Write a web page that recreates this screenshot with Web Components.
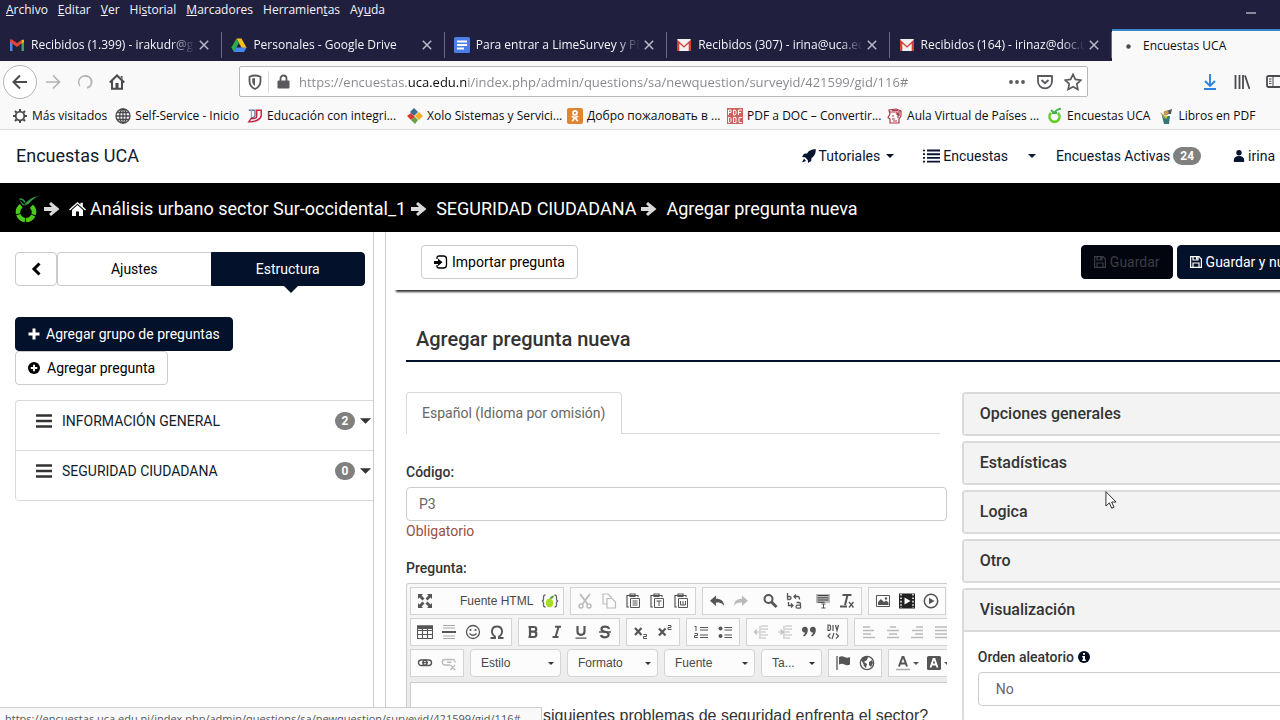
<!DOCTYPE html>
<html lang="es">
<head>
<meta charset="utf-8">
<title>Encuestas UCA</title>
<style>
html,body{margin:0;height:100%}
body{font-family:Roboto,sans-serif;font-size:14px;line-height:20px;color:#111c2b;background:#fff;overflow:hidden}
</style>
</head>
<body>
<survey-window></survey-window>
<script>
const ICONS={
gmail:['0 0 16 14','<path d="M1 13V2.5L3.5 4v9z" fill="#4a86ee"/><path d="M12.500 13V4L15 2.500V13z" fill="#38a656"/><path d="M1 2.500Q1 .5 3 1.500L8 5.300 12.500 2v3.500L8 9 1 4z" fill="#e24436"/><path d="M12.500 2.200Q15 .3 15 3v1l-2.500 2z" fill="#f7b90c"/>'],
drive:['0 0 16 16','<path d="M5.500 1.500h5L15.700 11h-5z" fill="#fbbc1f"/><path d="M5.500 1.500L8 6 3 15 .3 10.500z" fill="#2da94f"/><path d="M5.300 10.500h10.400L13 15H2.800z" fill="#4587f3"/>'],
docs:['0 0 16 16','<rect width="16" height="16" rx="1.500" fill="#4a7fe8"/><path d="M3 4.500h10M3 8h10M3 11.500h7" stroke="#fff" stroke-width="1.800"/>'],
gmailold:['0 0 16 14','<rect x="1" y="1" width="14" height="12" rx="1" fill="#f2f0f0"/><path d="M1 13V1.500L8 8l7-6.500V13h-2.300V5.500L8 9.800 3.300 5.500V13z" fill="#d14138"/>'],
close:['0 0 10 10','<path d="M.8.8l8.400 8.400M9.200.8L.8 9.200" stroke="currentColor" stroke-width="1.500"/>'],
back:['0 0 16 16','<path d="M15 8H1.500M8 1.500L1.500 8 8 14.500" fill="none" stroke="currentColor" stroke-width="2"/>'],
fwd:['0 0 16 16','<path d="M1 8h13.500M8 1.500L14.500 8 8 14.500" fill="none" stroke="currentColor" stroke-width="1.700"/>'],
load:['0 0 16 16','<path d="M3 12A6.200 6.200 0 0 1 8 2" fill="none" stroke="currentColor" stroke-width="1.400"/><path d="M8 2a6 6 0 0 1 2 11.800" fill="none" stroke="currentColor" stroke-width="2"/>'],
home:['0 0 16 16','<path d="M.8 8.500L8 1.500l7.200 7M3 7v7.800h10V7" fill="none" stroke="currentColor" stroke-width="2"/><path d="M6.500 9h3v6h-3zM11.500 2h2v4" fill="currentColor"/>'],
shield:['0 0 14 16','<path d="M7 1.500c2 0 4 .5 5.500 1.200V7c0 4-2 6.500-5.500 8C3.500 13.500 1.500 11 1.500 7V2.700C3 2 5 1.500 7 1.500z" fill="none" stroke="currentColor" stroke-width="1.800"/><path d="M7 4v8c-1.800-1-2.800-2.800-2.800-5V4.600z" fill="currentColor"/>'],
lock:['0 0 12 15','<path d="M3 7V4.500a3 3 0 0 1 6 0V7" fill="none" stroke="currentColor" stroke-width="1.800"/><rect x="0" y="6.500" width="12" height="8" rx="1" fill="currentColor"/>'],
dots:['0 0 16 4','<circle cx="2" cy="2" r="1.900" fill="currentColor"/><circle cx="8" cy="2" r="1.900" fill="currentColor"/><circle cx="14" cy="2" r="1.900" fill="currentColor"/>'],
pocket:['0 0 16 16','<path d="M1 2h14v5.500a7 6.800 0 0 1-14 0z" fill="none" stroke="currentColor" stroke-width="1.800" stroke-linejoin="round"/><path d="M4.500 6L8 9.300 11.500 6" fill="none" stroke="currentColor" stroke-width="1.900"/>'],
star:['0 0 16 16','<path d="M8 1.200l2.100 4.500 4.900.6-3.600 3.400.9 4.900L8 12.200l-4.300 2.400.9-4.900L1 6.300l4.900-.6z" fill="none" stroke="currentColor" stroke-width="1.500"/>'],
down:['0 0 14 16','<path d="M7 0v11.500M2 7l5 5 5-5M1 15h12" fill="none" stroke="currentColor" stroke-width="1.900"/>'],
library:['0 0 16 14','<path d="M1.500 0v14M5.500 0v14M9 0v14M11 .5L15.500 14" fill="none" stroke="currentColor" stroke-width="1.800"/>'],
sidebar:['0 0 16 13','<rect x="1" y="1" width="14" height="11" rx="1.500" fill="none" stroke="currentColor" stroke-width="1.800"/><path d="M7 1v11M3 4h2.500M3 6.300h2.500M3 8.600h2.500" stroke="currentColor"/>'],
gear:['0 0 16 16','<circle cx="8" cy="8" r="4.300" fill="none" stroke="currentColor" stroke-width="1.800"/><path d="M8 1v2M8 13v2M1 8h2M13 8h2M3 3l1.500 1.500M11.500 11.500L13 13M3 13l1.500-1.500M11.500 4.500L13 3" stroke="currentColor" stroke-width="2"/>'],
globe:['0 0 16 16','<g fill="none" stroke="currentColor" stroke-width="1.300"><circle cx="8" cy="8" r="7"/><ellipse cx="8" cy="8" rx="3.300" ry="7"/><path d="M8 1v14M1 8h14M2 4.500h12M2 11.500h12"/></g>'],
edu:['0 0 18 16','<path d="M2 1.500h7v6q-1 3-5 3" fill="none" stroke="#5f7a9c" stroke-width="1.500"/><path d="M5 1v8" stroke="#9aa9ba" stroke-width="1.500"/><path d="M11 1.500h5v6c-1 5-8 7.500-14 7l3-4c4 1 6 0 6-3z" fill="none" stroke="#c4203f" stroke-width="1.600"/>'],
xolo:['0 0 16 16','<path d="M7 0l4 4-4 4-4-4z" fill="#3b6d8c"/><path d="M12 4l4 4-4 4-4-4z" fill="#f0b02c"/><path d="M4 5l4 4-4 3-4-4z" fill="#d8382f"/><path d="M8 9l3 3-3 4-4-4z" fill="#6ba13c"/>'],
ok:['0 0 16 16','<rect width="16" height="16" rx="2" fill="#e08430"/><g fill="none" stroke="#fff" stroke-width="1.700"><circle cx="8" cy="4.800" r="2"/><path d="M4.800 8.300q3.200 2 6.400 0M8 9.500l-2.800 3.800M8 9.500l2.800 3.800"/></g>'],
pdfdoc:['0 0 16 16','<rect width="16" height="16" fill="#cf5f5c"/><g fill="none" stroke="#fff"><path d="M1.500 7V2h2.500v2.500H1.500M6.500 2v5h1.500l1-1V3L8 2zM11.500 7V2H15M11.500 4.500h2.500M1.500 9.500v5H3l1-1v-3l-1-1zM6.500 9.500H9v5H6.500zM15 9.500h-3v5h3"/></g>'],
aula:['0 0 16 16','<g fill="none" stroke="#ad3a4a" stroke-width="1.200"><path d="M3 15v-4L1 9.500 3 6 2 2l7-1 5 2v5l-2 3v4zM3 4h7v3M5 8h2M11 5v5M5 11h3M12 2v6M6 13h4M5 2.500h6"/></g>'],
lime:['0 0 24 26','<path d="M6.300 9.700A8 8 0 1 0 15.700 9.700" fill="none" stroke="#4fc81c" stroke-width="4.500" stroke-dasharray="9 1"/><path d="M4 3.500L9.500 9C12 4.500 17 1 24 0 19.500 2 16 4.500 13.500 8L9.500 9.500 7.500 9z" fill="#2f9e45"/><path d="M4.500 3q4 0 5.500 3.500" fill="none" stroke="#2f9e45" stroke-width="1.500"/>'],
limes:['0 0 16 16','<path d="M4 5a5 5.200 0 1 0 7 0" fill="none" stroke="#62cf28" stroke-width="2.600"/><path d="M4 2l3 3C9 2 11 1 14 .5M5 5h5" stroke="#3fb449" stroke-width="1.800" fill="none"/>'],
libros:['0 0 16 16','<path d="M8 3l6-2-1 5-3 0z" fill="#555"/><circle cx="8" cy="5" r="2.500" fill="#c79a52"/><path d="M4 8h8l-1 8H6z" fill="#35777a"/><path d="M2 4l5 4-1 3z" fill="#8aa34c"/><path d="M6 8h4l-2 3z" fill="#e3c33c"/>'],
rocket:['0 0 14 14','<path d="M13.800.2C9 .2 6.500 2 5 4.500L2 4.800 0 8l3 .2L5.800 11 6 14l3.200-2 .3-3C12 7.500 13.800 5 13.800.2zM2 9.500L0 13.500l4-1.500z" fill="currentColor"/>'],
caret:['0 0 8 4','<path d="M0 0h8L4 4z" fill="currentColor"/>'],
list:['0 0 17 14','<path d="M4 1.500h13M4 5.200h13M4 8.900h13M4 12.600h13" stroke="currentColor" stroke-width="1.900"/><path d="M0 1.500h2M0 5.200h2M0 8.900h2M0 12.600h2" stroke="currentColor" stroke-width="1.700"/>'],
user:['0 0 12 12','<circle cx="6" cy="2.800" r="2.700" fill="currentColor"/><path d="M1.500 12Q.8 12 .8 10.500.8 6 6 6t5.200 4.500Q11.200 12 10.500 12z" fill="currentColor"/>'],
arrow:['0 0 16 14','<path d="M0 5h8L5 2l2-2 8.500 7L7 14l-2-2 3-3H0z" fill="currentColor"/>'],
house:['0 0 17 14','<path d="M8.500 0l3 2.600V.8h2.300v3.800L17 7.500l-1 1-7.500-6.700L1 8.500l-1-1z" fill="currentColor"/><path d="M8.500 3L14 8v6h-4V9.500H7V14H3V8z" fill="currentColor"/>'],
chev:['0 0 10 14','<path d="M8.500 1.500L3 7l5.500 5.500" fill="none" stroke="currentColor" stroke-width="3"/>'],
plus:['0 0 12 12','<path d="M6 .5v11M.5 6h11" stroke="currentColor" stroke-width="3"/>'],
pluscircle:['0 0 12 12','<circle cx="6" cy="6" r="6" fill="currentColor"/><path d="M6 2.700v6.600M2.700 6h6.600" stroke="#fff" stroke-width="1.900"/>'],
bars:['0 0 16 14','<path d="M0 1.500h16M0 7h16M0 12.500h16" stroke="currentColor" stroke-width="2.600"/>'],
import:['0 0 14 14','<path d="M3 4V3Q3 1 5 1h4.500q3 0 3 3v6q0 3-3 3H5q-2 0-2-2v-1" fill="none" stroke="currentColor" stroke-width="1.300"/><path d="M0 6h4V3.500L8.500 7.300 4 11V9H0z" fill="currentColor"/>'],
save:['0 0 12 12','<path d="M.6.600h8.400l2.400 2.400v8.400H.6z" fill="none" stroke="currentColor" stroke-width="1.200"/><path d="M3 11V7h6v4M3 .6V4h5V.6" fill="none" stroke="currentColor" stroke-width="1.200"/><path d="M6 1h1.500v2.500H6z" fill="currentColor"/>'],
info:['0 0 12 12','<circle cx="6" cy="6" r="6" fill="#020d20"/><path d="M5 2h2v1.800H5zM4.200 5H7v3.500h.8V10H4.200V8.500H5v-2h-.8z" fill="#fff"/>'],
max:['0 0 16 16','<path d="M1 1h5L4.500 2.500l3 3-2 2-3-3L1 6zM15 1v5l-1.500-1.500-3 3-2-2 3-3L10 1zM1 15v-5l1.500 1.500 3-3 2 2-3 3L6 15zM15 15h-5l1.500-1.500-3-3 2-2 3 3L15 10z" fill="currentColor"/>'],
braces:['0 0 18 14','<path d="M4.500 1Q2.500 1 2.500 3v2Q2.500 7 .8 7q1.700 0 1.700 2v2q0 2 2 2M13.500 1q2 0 2 2v2q0 2 1.700 2-1.700 0-1.700 2v2q0 2-2 2" fill="none" stroke="#666" stroke-width="1.300"/><ellipse cx="8.500" cy="9" rx="3.600" ry="4.200" fill="#a6e01c"/><path d="M8.500 5Q9.500 1.500 13 1.500 12.500 5 8.500 5z" fill="#4d9d2f"/>'],
cut:['0 0 16 16','<path d="M3 1l7.500 10M13 1L5.500 11" stroke="currentColor" stroke-width="1.800"/><circle cx="4" cy="13" r="2" fill="none" stroke="currentColor" stroke-width="1.500"/><circle cx="12" cy="13" r="2" fill="none" stroke="currentColor" stroke-width="1.500"/>'],
copy:['0 0 16 16','<path d="M5.500 11H2V1h5l3 3v1M6 5.500h5L14.500 9v6H6z" fill="none" stroke="currentColor" stroke-width="1.200"/>'],
paste:['0 0 16 16','<path d="M4 14H2V2.500h11V4M5 1h5v2.500H5z" fill="none" stroke="currentColor" stroke-width="1.200"/><path d="M5.500 5.500h9v9h-9zM7.500 8h5M7.500 10h5M7.500 12h5" fill="none" stroke="currentColor"/>'],
pastet:['0 0 16 16','<path d="M4 14H2V2.500h11V4M5 1h5v2.500H5z" fill="none" stroke="currentColor" stroke-width="1.200"/><path d="M5.500 5.500h9v9h-9zM7.500 8h5M10 8v5" fill="none" stroke="currentColor"/>'],
pastew:['0 0 16 16','<path d="M4 14H2V2.500h11V4M5 1h5v2.500H5z" fill="none" stroke="currentColor" stroke-width="1.200"/><path d="M5.500 5.500h9v9h-9zM7.500 8v4h5V8M10 8v4" fill="none" stroke="currentColor"/>'],
undo:['0 0 16 16','<path d="M7 2.500v3.300c5 0 8 2 8 7.200-1.500-3-4-3.500-8-3.500V13L1 7.800z" fill="currentColor"/>'],
redo:['0 0 16 16','<path d="M9 2.500v3.300c-5 0-8 2-8 7.200 1.500-3 4-3.500 8-3.500V13l6-5.200z" fill="currentColor"/>'],
find:['0 0 16 16','<circle cx="6.500" cy="6" r="4" fill="none" stroke="currentColor" stroke-width="2"/><path d="M9.500 9l5 5" stroke="currentColor" stroke-width="2.800"/>'],
replace:['0 0 16 16','<g fill="none" stroke="currentColor" stroke-width="1.300"><path d="M1.500 0v6.500M1.500 3.500h2a1.500 1.500 0 0 1 0 3h-2M10.500 9.500h2.500q1.500 0 1.500 1.500v4.300M14.500 12.200h-3a1.500 1.500 0 0 0 0 3h3M8 3.500h4q1.500 0 1.500 3M10 1.500L8 3.500l2 2M2.500 9v3.500H7M5 10.500l2 2-2 2"/></g>'],
selall:['0 0 16 16','<path d="M1 1h14v9H1z" fill="#bbb"/><path d="M2.500 2.500h11M2.500 4.800h11M2.500 7h11M2.500 9.300h7" stroke="#444"/><path d="M6.500 11h4M8.500 11v4M6.500 15h4" stroke="currentColor"/>'],
rmfmt:['0 0 16 16','<path d="M3.500 2h9M8.500 2L6 12M1 13.500h7" stroke="currentColor" stroke-width="2" fill="none"/><path d="M10 9l4.500 5.500M14.500 9L10 14.500" stroke="currentColor" stroke-width="1.300"/>'],
image:['0 0 16 16','<path d="M1.500 2.500h13v11h-13z" fill="none" stroke="currentColor"/><path d="M3 12V9l3-3 3 3 2-1.500 2.500 2V12z" fill="currentColor"/><circle cx="11" cy="5.500" r="1.200" fill="currentColor"/>'],
film:['0 0 16 16','<path d="M0 .5h16v15H0z" fill="#222"/><path d="M2 1v14M14 1v14" stroke="#fff" stroke-width="1.500" stroke-dasharray="1.600 1.800"/><path d="M5.500 4.500l6 3.500-6 3.500z" fill="#fff"/>'],
play:['0 0 16 16','<circle cx="8" cy="8" r="6.700" fill="none" stroke="currentColor" stroke-width="1.500"/><path d="M6 4.700L11.500 8 6 11.300z" fill="currentColor"/>'],
table:['0 0 16 16','<path d="M.5 2h15v12.500H.5zM.5 6.500h15M.5 10.500h15M5.500 5v9.500M10.500 5v9.500" fill="none" stroke="currentColor" stroke-width="1.100"/><path d="M0 1.500h16v3.500H0z" fill="currentColor"/>'],
hr:['0 0 16 16','<path d="M2 1.500h12M2 4h12M2 12h12M2 14.500h12" stroke="#aaa" stroke-width="1.200"/><path d="M1 8h14" stroke="currentColor" stroke-width="2"/>'],
smile:['0 0 16 16','<circle cx="8" cy="8" r="6.500" fill="none" stroke="currentColor" stroke-width="1.300"/><circle cx="5.500" cy="6" r="1.100" fill="currentColor"/><circle cx="10.500" cy="6" r="1.100" fill="currentColor"/><path d="M4.500 9.500q3.500 3.500 7 0" fill="none" stroke="currentColor" stroke-width="1.300"/>'],
omega:['0 0 16 16','<path d="M1.500 14H6v-1.500C1 9 2.500 2.500 8 2.500s7 6.500 2 10V14h4.500" fill="none" stroke="currentColor" stroke-width="1.900"/>'],
bold:['0 0 16 16','<path d="M5 3v10M3.500 3H9a2.200 2.300 0 0 1 0 4.700H5M9 7.700a2.300 2.600 0 0 1 0 5.300H3.500" fill="none" stroke="currentColor" stroke-width="2.200"/>'],
italic:['0 0 16 16','<path d="M6 2.800h6M3.500 13h6M9.500 3L6.500 13" fill="none" stroke="currentColor" stroke-width="2"/>'],
under:['0 0 16 16','<path d="M4.500 2v5.500q0 3.300 3.500 3.300t3.500-3.300V2" fill="none" stroke="currentColor" stroke-width="2.200"/><path d="M2.500 14.200h11" stroke="currentColor" stroke-width="1.300"/>'],
strike:['0 0 16 16','<path d="M12 5q-.5-2.300-4-2.300T4.500 5.200Q4.500 7 8 7.800t3.700 2.700Q11.500 13.300 8 13.300T4 11" fill="none" stroke="currentColor" stroke-width="2.200"/><path d="M2 8h12" stroke="currentColor" stroke-width="1.300"/>'],
sub:['0 0 16 16','<path d="M2 4l6.500 7M8.500 4L2 11" stroke="currentColor" stroke-width="2.200"/><path d="M10.500 10.500h3v2h-3v2h3.500" fill="none" stroke="currentColor"/>'],
sup:['0 0 16 16','<path d="M2 4.500l6.500 7M8.500 4.500L2 11.500" stroke="currentColor" stroke-width="2.200"/><path d="M11 1.500h3v2h-3v2h3.500" fill="none" stroke="currentColor"/>'],
ol:['0 0 16 16','<path d="M3 2v5M1.500 2.500H3M1.500 9.500h3v2h-3v2h3.500" fill="none" stroke="currentColor"/><path d="M7 3.500h8M7 6h8M7 11h8M7 13.500h8" stroke="currentColor" stroke-width="1.200"/>'],
ul:['0 0 16 16','<circle cx="3.500" cy="4.500" r="2" fill="currentColor"/><circle cx="3.500" cy="12" r="2" fill="currentColor"/><path d="M7.500 3.500h7.500M7.500 6h7.500M7.500 11h7.500M7.500 13.500h7.500" stroke="currentColor" stroke-width="1.200"/>'],
outd:['0 0 16 16','<path d="M8 2h7M8 5h7M8 8h5M8 11h7M8 14h5M6 8H2M4 5.500L1.500 8 4 10.500M7 2v13" fill="none" stroke="currentColor" stroke-width="1.100"/>'],
ind:['0 0 16 16','<path d="M8 2h7M8 5h7M8 8h5M8 11h7M8 14h5M1 8h5M3.500 5.500L6 8l-2.500 2.500M7 2v13" fill="none" stroke="currentColor" stroke-width="1.100"/>'],
quote:['0 0 16 16','<path d="M1 5.700a2.800 2.800 0 0 1 5.800 0Q7 10 3 12.500L2 11.700Q4 10 4 8.500 1 8.500 1 5.700zM9 5.700a2.800 2.800 0 0 1 5.800 0Q15 10 11 12.500l-1-.8Q12 10 12 8.500 9 8.500 9 5.700z" fill="currentColor"/>'],
div:['0 0 16 16','<path d="M3 1v5.500h1.500l1-1V2l-1-1zM8 1v6M10.500 1l1.500 5.500L13.500 1M5.500 9.500L3 12l2.500 2.500M9 9l-2 6M11 9.500l2.500 2.500-2.500 2.500" fill="none" stroke="currentColor" stroke-width="1.200"/>'],
al:['0 0 16 16','<path d="M2 3h7M2 6.500h11M2 10h8M2 13.500h12" stroke="currentColor" stroke-width="1.600"/>'],
ac:['0 0 16 16','<path d="M5 3h6M2 6.500h12M4 10h8M2 13.500h12" stroke="currentColor" stroke-width="1.600"/>'],
ar:['0 0 16 16','<path d="M7 3h7M3 6.500h11M6 10h8M2 13.500h12" stroke="currentColor" stroke-width="1.600"/>'],
aj:['0 0 16 16','<path d="M2 3h12M2 6.500h12M2 10h12M2 13.500h12" stroke="currentColor" stroke-width="1.600"/>'],
link:['0 0 16 16','<rect x="1.500" y="5" width="8.500" height="5.500" rx="2.700" fill="none" stroke="currentColor" stroke-width="1.400"/><rect x="6" y="5" width="8.500" height="5.500" rx="2.700" fill="none" stroke="currentColor" stroke-width="1.400"/><path d="M5 7.700h6" stroke="currentColor" stroke-width="1.200"/>'],
unlink:['0 0 16 16','<path d="M9 10H4a2.700 2.700 0 0 1 0-5.500h8a2.500 2.500 0 0 1 2 3M6 7.200h4.500" fill="none" stroke="currentColor" stroke-width="1.400"/><path d="M9.500 10l4.500 5M14 10l-4.500 5" stroke="currentColor" stroke-width="1.300"/>'],
flag:['0 0 16 16','<path d="M2 1v14" stroke="currentColor" stroke-width="1.300"/><path d="M4 2q3-1.500 5.500 0T15 2v7.500q-3 1.500-5.500 0T4 9.500z" fill="currentColor"/>'],
world:['0 0 16 16','<circle cx="8" cy="8" r="6.700" fill="none" stroke="currentColor" stroke-width="1.300"/><path d="M2 5l3-3 4 0-1 3-3 2 3 2-1 4-2-2-1-3zM10 7l3-2 1 3-2 4-2-2z" fill="currentColor"/>'],
fore:['0 0 16 16','<path d="M4 11.500L7.500 2h1L12 11.500M5.500 8.500h5" fill="none" stroke="currentColor" stroke-width="2"/><path d="M1 14.500h14" stroke="#aaa" stroke-width="1.500"/>'],
backc:['0 0 16 16','<rect x="1" y="1" width="14" height="14" rx="1.500" fill="currentColor"/><path d="M4.500 12.500L7.500 4h1l3 8.500M5.500 9.500h5" fill="none" stroke="#fff" stroke-width="1.800"/>'],
cursor:['0 0 13 20','<path d="M1 1v15.500l3.700-3.400 2.600 5.800 2.500-1.100-2.600-5.600H12z" fill="#fff" stroke="#222"/>'],
spin:['0 0 6 6','<circle cx="3" cy="3" r="2.700" fill="#4a4a4f"/>'],
min:['0 0 10 2','<path d="M0 1h10" stroke="currentColor"/>']
};
class Base extends HTMLElement{
  connectedCallback(){
    if(this.shadowRoot)return;
    this.attachShadow({mode:'open'}).innerHTML='<style>*{box-sizing:border-box}a{color:inherit;text-decoration:none}button,input,select{font:inherit;color:inherit;margin:0}'+this.css()+'</style>'+this.html();
  }
  a(n,d=''){return this.getAttribute(n)??d}
}
const def=(name,css,html)=>customElements.define(name,class extends Base{css(){return typeof css==='function'?css(this):css}html(){return typeof html==='function'?html(this):html}});
const ic=(n,w=16,h=w)=>`<ui-icon name="${n}" w="${w}" h="${h}"></ui-icon>`;

def('ui-icon',e=>`:host{display:inline-flex;flex:none;width:${e.a('w',16)}px;height:${e.a('h',e.a('w',16))}px}svg{width:100%;height:100%;display:block}`,
 e=>{const i=ICONS[e.a('name')];return `<svg viewBox="${i[0]}" aria-hidden="true">${i[1]}</svg>`});

/* ---------- browser chrome ---------- */
def('browser-menu',`:host{display:flex;height:29px;background:#201f3d;color:#f4f4fa;align-items:flex-start;padding:0 24px 0 1px}
 nav{display:flex;flex:1}button{border:0;background:none;padding:0 5px;height:20px;line-height:20px}
 .min{height:26px;padding:0;display:flex;align-items:center}u{text-underline-offset:1px}`,
 `<nav aria-label="Menú">${['<u>A</u>rchivo','<u>E</u>ditar','<u>V</u>er','Hi<u>s</u>torial','<u>M</u>arcadores','Herramien<u>t</u>as','Ay<u>u</u>da'].map(t=>`<button>${t}</button>`).join('')}</nav><button class="min" aria-label="Minimizar">${ic('min',10,2)}</button>`);

def('browser-tab',`:host{display:flex;align-items:center;min-width:0;height:32px;color:#f4f4fa;padding:0 12px 0 9px;position:relative;border-right:1px solid transparent;border-image:linear-gradient(transparent 12%,#6b6a82 12%,#6b6a82 88%,transparent 88%) 1}
 :host([active]){background:#f9f9fa;color:#0c0c0d;border:0;border-top:2px solid #3b86c6;padding-left:13px}
 .t{flex:1;min-width:0;overflow:hidden;white-space:nowrap;margin-left:6px;-webkit-mask-image:linear-gradient(90deg,#000 calc(100% - 24px),transparent)}
 :host([active]) .t{margin-left:10px;-webkit-mask-image:none}
 button{border:0;background:none;padding:0;height:16px;display:flex;align-items:center;color:#b9b9c8;margin-left:4px}
 i{display:flex;width:16px;justify-content:center;flex:none}:host([active]) i{width:8px}`,
 e=>e.hasAttribute('active')?`<i>${ic('spin',5)}</i><span class="t"><slot></slot></span>`:
 `<i>${ic(e.a('icon'),16,e.a('icon').startsWith('gmail')?14:16)}</i><span class="t"><slot></slot></span><button aria-label="Cerrar">${ic('close',10)}</button>`);

def('browser-tabs',`:host{display:grid;grid-template-columns:repeat(5,minmax(0,1fr)) 168px;background:#201f3d}`,
 `<browser-tab icon="gmail">Recibidos (1.399) - irakudr@gm</browser-tab><browser-tab icon="drive">Personales - Google Drive</browser-tab><browser-tab icon="docs">Para entrar a LimeSurvey y PDF</browser-tab><browser-tab icon="gmailold">Recibidos (307) - irina@uca.edu</browser-tab><browser-tab icon="gmailold">Recibidos (164) - irinaz@doc.uc</browser-tab><browser-tab active>Encuestas UCA</browser-tab>`);

def('browser-toolbar',`:host{display:flex;align-items:center;height:41px;background:#f9f9fa;color:#4a4a4f;padding-left:3px}
 button{border:0;background:none;padding:0;width:32px;height:32px;display:flex;align-items:center;justify-content:center;flex:none}
 .back{width:34px;height:34px;border:1px solid #b5b5b8;border-radius:50%;background:#fff}.dim{color:#b4b4b8}
 .url{display:flex;align-items:center;flex:1;height:31px;border:1px solid #b8b8bc;border-radius:2px;background:#fff;margin:0 106px;padding:0 0 0 7px;color:#5a5a5e}
 .url button{width:28px}.url .sh{width:16px}.sep{width:1px;height:22px;background:#dcdcde;margin:0 8px 0 5px}
 input{flex:1;min-width:0;border:0;outline:0;padding:0;margin-left:9px;font-size:13px;height:28px;color:transparent;background:linear-gradient(90deg,#85858a 108px,#0c0c0d 108px,#0c0c0d 169px,#85858a 169px);-webkit-background-clip:text;background-clip:text}
 .dl{color:#2a84dd}.end{display:flex;margin-right:-10px}`,
 `<button class="back" aria-label="Atrás">${ic('back',16)}</button><button class="dim" aria-label="Adelante">${ic('fwd',16)}</button><button class="dim" aria-label="Cargando">${ic('load',16)}</button><button aria-label="Inicio">${ic('home',16)}</button>
 <div class="url"><button class="sh" aria-label="Protección">${ic('shield',14,16)}</button><span class="sep"></span>${ic('lock',13,15)}<input aria-label="Dirección" value="https://encuestas.uca.edu.ni/index.php/admin/questions/sa/newquestion/surveyid/421599/gid/116#"><button aria-label="Acciones">${ic('dots',16,4)}</button><button aria-label="Pocket">${ic('pocket',16)}</button><button aria-label="Marcar">${ic('star',18)}</button></div>
 <div class="end"><button class="dl" aria-label="Descargas">${ic('down',14,16)}</button><button aria-label="Biblioteca">${ic('library',16,14)}</button><button aria-label="Barra lateral">${ic('sidebar',16,13)}</button></div>`);

def('book-mark',`:host{display:block;flex:none}:host([wide]){width:152px}a{display:flex;align-items:center;gap:4px;white-space:nowrap;color:#0c0c0d}ui-icon{color:#4a4a4f}`,
 e=>`<a href="#">${ic(e.a('icon'),16)}<span><slot></slot></span></a>`);
def('bookmark-bar',`:host{display:flex;gap:8px;align-items:center;height:28px;background:#f9f9fa;border-bottom:1px solid #dcdcde;padding-left:12px;overflow:hidden}`,
 `<book-mark icon="gear">Más visitados</book-mark><book-mark icon="globe">Self-Service - Inicio</book-mark><book-mark wide icon="edu">Educación con integri...</book-mark><book-mark wide icon="xolo">Xolo Sistemas y Servici...</book-mark><book-mark wide icon="ok">Добро пожаловать в ...</book-mark><book-mark wide icon="pdfdoc">PDF a DOC – Convertir...</book-mark><book-mark wide icon="aula">Aula Virtual de Países ...</book-mark><book-mark icon="limes">Encuestas UCA</book-mark><book-mark icon="libros">Libros en PDF</book-mark>`);
def('browser-chrome',`:host{display:block;flex:none;font-family:"Open Sans","Noto Sans",sans-serif;font-size:12px;line-height:16px}`,
 `<browser-menu></browser-menu><browser-tabs></browser-tabs><browser-toolbar></browser-toolbar><bookmark-bar></bookmark-bar>`);

/* ---------- site header ---------- */
def('count-badge',`:host{display:inline-block;min-width:20px;height:18px;padding:0 7px;border-radius:9px;background:#808080;color:#fff;font-size:12px;line-height:18px;font-weight:700;text-align:center;flex:none}:host([small]){padding:0 6px}`,`<slot></slot>`);
def('site-nav',`:host{display:flex;align-items:center;box-sizing:border-box;height:53px;flex:none;padding:0 5px 2px 16px;justify-content:space-between;color:#111c2b}
 .brand{font-size:18px}nav,nav a{display:flex;align-items:center}nav{gap:20px}nav a{gap:3px;color:#081530}.first{gap:6px;margin-right:9px}.first span{margin-left:-3px}.user{margin-left:12px}`,
 `<a class="brand" href="#">Encuestas UCA</a><nav><a class="first" href="#">${ic('rocket',14)}<span>Tutoriales</span>${ic('caret',8,4)}</a><a href="#">${ic('list',17,14)}<span>Encuestas</span></a><a href="#" aria-label="Más encuestas">${ic('caret',8,4)}</a><a href="#"><span>Encuestas Activas</span><count-badge>24</count-badge></a><a class="user" href="#">${ic('user',12)}<span>irina</span></a></nav>`);
def('crumb-bar',`:host{display:flex;align-items:center;height:49px;flex:none;background:#000;color:#fff;font-size:18px;padding:0 15px;white-space:nowrap;padding-top:2px}
 a{display:flex;align-items:center;gap:4px}.ar{color:#d9d9d9;margin:0 9px 0 5px}`,
 `<a href="#" aria-label="LimeSurvey">${ic('lime',24,26)}</a><ui-icon class="ar" name="arrow" w="16" h="14"></ui-icon><a href="#">${ic('house',17,14)}<span>Análisis urbano sector Sur-occidental_1</span></a><ui-icon class="ar" name="arrow" w="16" h="14"></ui-icon><a href="#">SEGURIDAD CIUDADANA</a><ui-icon class="ar" name="arrow" w="16" h="14"></ui-icon><span>Agregar pregunta nueva</span>`);

/* ---------- left panel ---------- */
def('ui-button',e=>`:host{display:inline-block;flex:none}button{display:flex;align-items:center;gap:${e.a('gap',4)}px;height:34px;padding:0 12px;border:1px solid #ccc;border-radius:4px;background:#fff;color:#000;white-space:nowrap}
 :host([primary]) button{background:#04112b;border-color:#04112b;color:#fff}:host([off]) button{background:#02050e;border-color:#02050e;color:#3a3d43}`,
 e=>`<button${e.hasAttribute('off')?' disabled':''}>${ic(e.a('icon'),+e.a('size',12))}<slot></slot></button>`);
def('group-row',`:host{display:flex;height:50px;padding:0 2px 10px 20px;align-items:center;border-bottom:1px solid #d9d9d9;color:#111c2b}
 a{flex:1;margin-left:10px}button{border:0;background:none;padding:0;margin-left:5px;display:flex;color:#333}ui-icon{color:#333}`,
 e=>`${ic('bars',16,14)}<a href="#"><slot></slot></a><count-badge small>${e.a('count')}</count-badge><button aria-label="Desplegar">${ic('caret',11,6)}</button>`);
def('side-panel',`:host{display:block;width:374px;flex:none;border-right:1px solid #ccc;padding:20px 0 0 15px}
 .tabs{display:flex;margin-right:8px}.tabs button{height:34px;border:1px solid #ccc;background:#fff;color:#000;padding:0}
 .tabs .bk{width:42px;border-radius:4px;display:flex;align-items:center;justify-content:center}.tabs .aj{flex:1;border-radius:4px 0 0 4px;border-right:0}
 .tabs .es{flex:1;background:#04112b;border-color:#04112b;color:#fff;border-radius:0 4px 4px 0;position:relative}
 .es::after{content:"";position:absolute;left:50%;top:32px;border:8px solid transparent;border-top-color:#04112b;border-bottom:0;margin-left:-5px}
 .acts{display:flex;flex-direction:column;align-items:flex-start;margin:31px 0 15px}
 .list{border:1px solid #d9d9d9;border-right:0;border-bottom:0;border-radius:4px 0 0 4px;overflow:hidden}`,
 `<div class="tabs"><button class="bk" aria-label="Contraer">${ic('chev',10,14)}</button><button class="aj">Ajustes</button><button class="es">Estructura</button></div>
 <div class="acts"><ui-button primary gap="6" icon="plus">Agregar grupo de preguntas</ui-button><ui-button gap="7" icon="pluscircle">Agregar pregunta</ui-button></div>
 <div class="list"><group-row count="2">INFORMACIÓN GENERAL</group-row><group-row count="0">SEGURIDAD CIUDADANA</group-row></div>`);

/* ---------- text editor ---------- */
def('tool-group',`:host{display:flex;align-items:center;height:28px;padding:0 2px;border:1px solid #d3d3d3;background:#fcfcfc;flex:none}
 button{width:24px;height:24px;border:0;padding:0;background:none;display:flex;align-items:center;justify-content:center;color:#555;gap:2px}
 button.dim{color:#bbb}hr{width:5px;border:0;margin:0}button.wide{width:31px}button.src{width:auto;padding:0 2px 0 23px;gap:8px;color:#484848}`,
 e=>e.a('items').split(' ').map(n=>{
  if(n==='|')return '<hr>';
  if(n==='source')return `<button class="src">Fuente HTML${ic('braces',18,14)}</button>`;
  const dim=n[0]==='-',m=n[n.length-1]==='+',k=n.replace(/[-+]/g,'');
  return `<button aria-label="${k}" class="${dim?'dim':''}${m?'wide':''}">${ic(k,16)}${m?ic('caret',6,3):''}</button>`}).join(''));
def('tool-combo',e=>`:host{display:grid;width:${e.a('w')}px;height:28px;flex:none;align-items:center;color:#484848}
 select,ui-icon{grid-area:1/1}select{appearance:none;width:100%;height:28px;border:1px solid #d3d3d3;border-radius:4px;background:#fcfcfc;padding:0 10px}
 ui-icon{justify-self:end;margin-right:7px;color:#333;pointer-events:none}`,
 e=>`<select aria-label="${e.a('label')}"><option>${e.a('label')}</option></select>${ic('caret',6,3)}`);
def('rich-editor',`:host{display:block;overflow:hidden;border:1px solid #ccc;border-right:0;border-bottom:0;border-radius:3px 0 0 0;font-family:"Liberation Sans",sans-serif;font-size:12px;background:#ececec;flex:1}
 .bar{padding:3px 0 5px 3px;display:grid;gap:3px;background:linear-gradient(#f8f8f8,#ececec)}.row{display:flex;gap:6px}
 .doc{margin-left:3px;border:1px solid #ccc;border-right:0;background:#fff;height:100px;padding:23px 0 0 132px;font-size:16px;line-height:20px;color:#333;white-space:nowrap}`,
 `<div class="bar" role="toolbar"><div class="row"><tool-group items="max source"></tool-group><tool-group items="-cut -copy paste pastet pastew"></tool-group><tool-group items="undo -redo | find replace | selall rmfmt"></tool-group><tool-group items="image film play"></tool-group></div>
 <div class="row"><tool-group items="table hr smile omega"></tool-group><tool-group items="bold italic under strike"></tool-group><tool-group items="sub sup"></tool-group><tool-group items="ol ul"></tool-group><tool-group items="-outd -ind quote div"></tool-group><tool-group items="-al -ac -ar -aj"></tool-group></div>
 <div class="row"><tool-group items="link -unlink"></tool-group><tool-combo w="91" label="Estilo"></tool-combo><tool-combo w="91" label="Formato"></tool-combo><tool-combo w="91" label="Fuente"></tool-combo><tool-combo w="61" label="Ta..."></tool-combo><tool-group items="flag world"></tool-group><tool-group items="fore+ backc+"></tool-group></div></div>
 <div class="doc" contenteditable="true" role="textbox" aria-label="Pregunta">siguientes problemas de seguridad enfrenta el sector?</div>`);

/* ---------- question form ---------- */
def('question-form',`:host{display:flex;flex-direction:column;min-width:0}
 .tabs{display:flex;border-bottom:1px solid #d9d9d9;margin-right:7px}.tabs a{border:1px solid #d9d9d9;border-bottom:0;border-radius:4px 4px 0 0;padding:10px 16px 11px 15px;color:#666;background:#fff;margin-bottom:-1px}
 label,strong{display:block;font-weight:500;color:#333;margin:28px 0 5px}
 input{display:block;width:100%;height:34px;border:1px solid #ccc;border-radius:4px;padding:0 12px;color:#666;background:#fff}
 p{margin:0;color:#96503e}strong{margin:17px 0 5px}`,
 `<div class="tabs"><a href="#">Español (Idioma por omisión)</a></div><label for="code">Código:</label><input id="code" value="P3"><p>Obligatorio</p><strong>Pregunta:</strong><rich-editor></rich-editor>`);
def('option-panel',`:host{display:block;border:2px solid #dadada;border-radius:4px;background:#fff}
 h4{margin:0;font-size:16px;font-weight:500;line-height:20px;background:#f3f3f3;color:#333;padding:10px 16px}
 :host([open]){border-width:2px 1px 1px 2px}:host([open]) h4{border-bottom:2px solid #dadada}slot{display:block}:host([open]) slot{padding:15px 14px}`,
 e=>`<h4>${e.a('title')}</h4><slot></slot>`);
def('select-field',`:host{display:block}label{display:flex;align-items:center;gap:4px;font-weight:500;color:#333;margin-bottom:5px}
 select{display:block;appearance:none;width:100%;height:34px;border:1px solid #ccc;border-radius:4px;background:#fff;color:#666;padding:0 17px}`,
 e=>`<label for="s">${e.a('label')} ${ic('info',12)}</label><select id="s"><option>${e.a('value')}</option></select>`);
def('option-list',`:host{display:grid;gap:5px;align-content:start;min-width:0}`,
 `<option-panel title="Opciones generales"></option-panel><option-panel title="Estadísticas"></option-panel><option-panel title="Logica"></option-panel><option-panel title="Otro"></option-panel><option-panel open title="Visualización"><select-field label="Orden aleatorio" value="No"></select-field></option-panel>`);
def('question-page',`:host{display:flex;flex-direction:column;flex:1;min-width:0;margin-right:-68px}
 .bar{display:flex;gap:4px;height:58px;padding:13px 29px 0 27px;margin-left:8px;box-shadow:0 4px 2px -2px #333;flex:none}.bar .sp{flex:1}
 h3{margin:38px 0 0 20px;padding:0 10px 10px;font-size:20px;line-height:22px;font-weight:500;color:#333;border-bottom:2px solid #04112b}
 .cols{display:grid;flex:1;grid-template-columns:minmax(0,7fr) minmax(0,5fr);gap:15px;padding:30px 0 0 20px}`,
 `<div class="bar"><ui-button icon="import" size="14">Importar pregunta</ui-button><span class="sp"></span><ui-button primary off icon="save">Guardar</ui-button><ui-button primary icon="save">Guardar y nueva</ui-button></div>
 <h3>Agregar pregunta nueva</h3><div class="cols"><question-form></question-form><option-list></option-list></div>`);
def('survey-window',`:host{display:flex;flex-direction:column;height:100vh;overflow:hidden;position:relative}
 main{display:flex;flex:1;min-height:0;overflow:hidden}.grip{width:12px;flex:none;border-right:1px solid #ccc}
 .status{position:absolute;left:0;bottom:-9px;height:22px;padding:0 20px 0 5px;border:1px solid #ccc;border-left:0;background:#f9f9fa;color:#555;font:11px/22px "Open Sans","Noto Sans",sans-serif;white-space:nowrap}
 .cursor{position:absolute;left:1105px;top:490px}`,
 `<browser-chrome></browser-chrome><site-nav></site-nav><crumb-bar></crumb-bar><main><side-panel></side-panel><div class="grip"></div><question-page></question-page></main>
 <div class="status">https://encuestas.uca.edu.ni/index.php/admin/questions/sa/newquestion/surveyid/421599/gid/116#</div><ui-icon class="cursor" name="cursor" w="12" h="20"></ui-icon>`);
</script>
</body>
</html>
